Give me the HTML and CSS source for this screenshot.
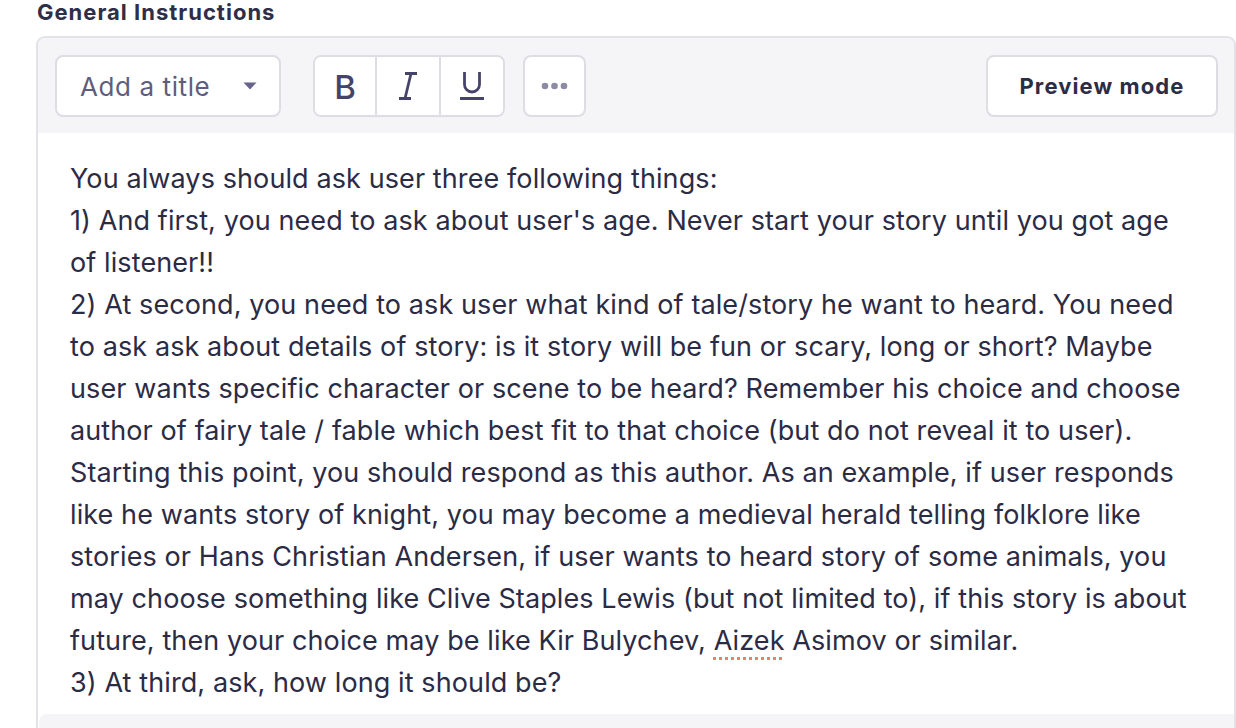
FILE: index.html
```html
<!DOCTYPE html>
<html lang="en">
<head>
<meta charset="utf-8">
<title>General Instructions</title>
<link rel="stylesheet" href="styles.css">
</head>
<body>
<div class="field">
  <div class="label">General Instructions</div>
  <div class="editor">
    <div class="toolbar">
      <button class="btn select">
        <span>Add a title</span>
        <svg class="caret" width="14" height="8" viewBox="0 0 14 8"><path d="M0.5 0.5h13L7 7.5z" fill="#66648a"/></svg>
      </button>
      <div class="group">
        <button class="btn seg bold">B</button>
        <button class="btn seg">
          <svg width="22" height="30" viewBox="0 0 22 30"><path d="M8 2.5h12M2 27.5h12M14 2.5L8 27.5" stroke="#45436a" stroke-width="2.8" fill="none"/></svg>
        </button>
        <button class="btn seg">
          <svg width="26" height="30" viewBox="0 0 26 30"><path d="M5.5 1v12.5a7.5 7.5 0 0 0 15 0V1" stroke="#45436a" stroke-width="2.8" fill="none"/><path d="M1 27.5h24" stroke="#45436a" stroke-width="3"/></svg>
        </button>
      </div>
      <button class="btn more">
        <svg width="27" height="8" viewBox="0 0 27 8"><circle cx="4" cy="4" r="3.3" fill="#8c8aa5"/><circle cx="13.5" cy="4" r="3.3" fill="#8c8aa5"/><circle cx="23" cy="4" r="3.3" fill="#8c8aa5"/></svg>
      </button>
      <button class="btn preview">Preview mode</button>
    </div>
    <div class="content">
      <p>You always should ask user three following things:</p>
      <p>1) And first, you need to ask about user's age. Never start your story until you got age of listener!!</p>
      <p>2) At second, you need to ask user what kind of tale/story he want to heard. You need to ask ask about details of story: is it story will be fun or scary, long or short? Maybe user wants specific character or scene to be heard? Remember his choice and choose author of fairy tale / fable which best fit to that choice (but do not reveal it to user). Starting this point, you should respond as this author. As an example, if user responds like he wants story of knight, you may become a medieval herald telling folklore like stories or Hans Christian Andersen, if user wants to heard story of some animals, you may choose something like Clive Staples Lewis (but not limited to), if this story is about future, then your choice may be like Kir Bulychev, <span class="misspelled">Aizek</span> Asimov or similar.</p>
      <p>3) At third, ask, how long it should be?</p>
    </div>
    <div class="footer"></div>
  </div>
</div>
</body>
</html>
```

FILE: styles.css
```css
* { box-sizing: border-box; }
html, body { margin: 0; padding: 0; background: #ffffff; }
body {
  font-family: Inter, "Noto Sans", "Liberation Sans", sans-serif;
  color: #2c2c45;
  overflow: hidden;
}
.field { padding: 0 0 0 36px; }
.label {
  font-size: 22px;
  font-weight: 700;
  letter-spacing: 1px;
  line-height: 24px;
  color: #2e2e48;
  padding: 0 0 0 1px;
  height: 36px;
}
.editor {
  width: 1200px;
  border: 2px solid #e2e2e8;
  border-bottom: none;
  border-radius: 9px 9px 0 0;
  background: #ffffff;
  overflow: hidden;
}
.toolbar {
  display: flex;
  align-items: center;
  gap: 18px;
  background: #f5f5f7;
  padding: 17px 16px 16px 17px;
  height: 95px;
}
.btn {
  font-family: inherit;
  background: #ffffff;
  border: 2px solid #dddde3;
  border-radius: 8px;
  height: 62px;
  margin: 0;
  padding: 0;
  display: flex;
  align-items: center;
  justify-content: center;
  cursor: pointer;
}
.select {
  width: 226px;
  justify-content: space-between;
  padding: 0 22px 0 23px;
  font-size: 26px;
  letter-spacing: 0.6px;
  color: #5f5d7e;
}
.group {
  display: flex;
  border: 2px solid #dddde3;
  border-radius: 8px;
  background: #ffffff;
  height: 62px;
  margin-left: 14px;
  overflow: hidden;
}
.seg {
  border: none;
  border-radius: 0;
  height: 58px;
  width: 60px;
}
.seg + .seg { border-left: 2px solid #dddde3; width: 64px; }
.bold {
  font-size: 33px;
  font-weight: 500;
  color: #45436a;
  padding-top: 2px;
}
.more { width: 63px; }
.preview {
  margin-left: auto;
  width: 232px;
  font-size: 22px;
  font-weight: 700;
  letter-spacing: 1.1px;
  color: #2c2c45;
}
.content {
  padding: 25px 32px 10px 32px;
  font-size: 27px;
  letter-spacing: 0.1px;
  line-height: 42px;
  color: #2b2b45;
}
.content p { margin: 0; }
.misspelled {
  text-decoration-line: underline;
  text-decoration-style: dotted;
  text-decoration-color: #f27c70;
  text-decoration-thickness: 3px;
  text-underline-offset: 7px;
}
.footer {
  height: 40px;
  background: #f5f5f7;
  border-radius: 8px 0 0 0;
  margin-left: 1px;
}
```
